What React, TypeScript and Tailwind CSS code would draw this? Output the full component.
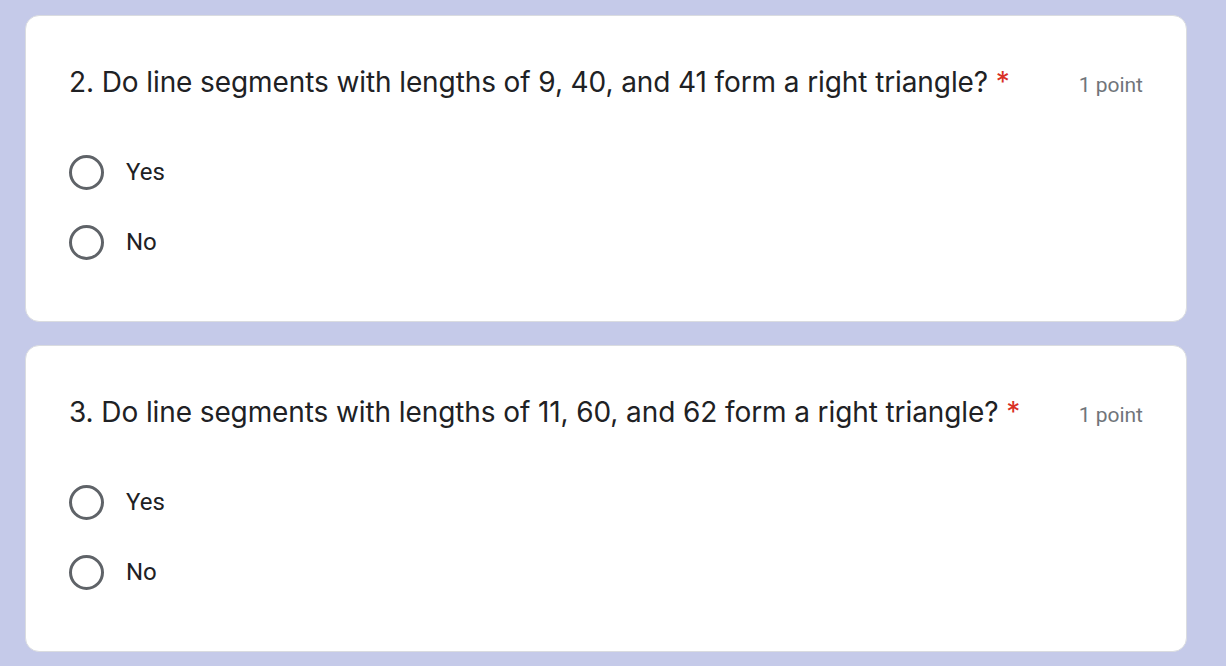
import React from 'react';

interface Question {
  number: number;
  text: string;
  points: string;
  options: string[];
}

const questions: Question[] = [
  {
    number: 2,
    text: 'Do line segments with lengths of 9, 40, and 41 form a right triangle?',
    points: '1 point',
    options: ['Yes', 'No'],
  },
  {
    number: 3,
    text: 'Do line segments with lengths of 11, 60, and 62 form a right triangle?',
    points: '1 point',
    options: ['Yes', 'No'],
  },
];

const QuestionCard: React.FC<{ q: Question }> = ({ q }) => (
  <div className="bg-white border border-[#dadce0] rounded-[14px] px-[43px] pt-[45px] pb-[44px]">
    {/* Title row */}
    <div className="flex justify-between items-baseline h-[42px]">
      <div className="text-[28px] leading-[42px] text-[#202124] tracking-[-0.1px]">
        {q.number}. {q.text} <span className="text-[#d93025]">*</span>
      </div>
      <div className="text-[21px] text-[#70757a] shrink-0" style={{ fontFamily: 'Roboto, sans-serif' }}>{q.points}</div>
    </div>

    {/* Options */}
    <div className="mt-[34px] flex flex-col">
      {q.options.map(opt => (
        <label key={opt} className="flex items-center h-[70px] cursor-pointer">
          <span className="w-[35px] h-[35px] rounded-full border-[3.5px] border-[#5f6368] shrink-0" />
          <span className="ml-[22px] text-[24px] text-[#202124]" style={{ fontFamily: 'Roboto, sans-serif' }}>{opt}</span>
        </label>
      ))}
    </div>
  </div>
);

export default function App() {
  return (
    <div
      className="min-h-screen bg-[#c5cae9] pl-[25px] pr-[39px] pt-[15px] pb-[15px] flex flex-col gap-[23px]"
      style={{ fontFamily: 'Inter, Roboto, sans-serif' }}
    >
      {questions.map(q => (
        <QuestionCard key={q.number} q={q} />
      ))}
    </div>
  );
}
